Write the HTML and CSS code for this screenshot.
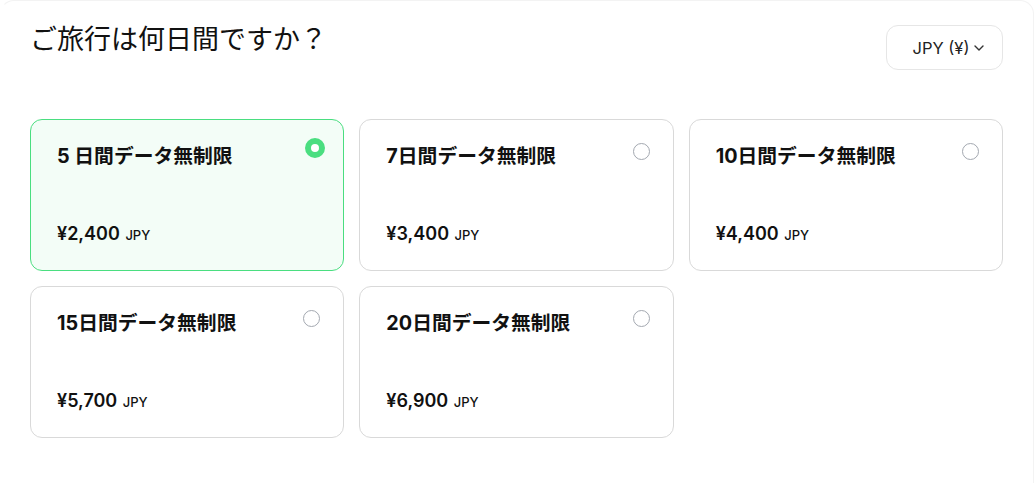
FILE: index.html
```html
<!DOCTYPE html>
<html lang="ja">
<head>
<meta charset="utf-8">
<link rel="stylesheet" href="styles.css">
</head>
<body>
<div class="panel">
  <div class="header">
    <h1 class="title">ご旅行は何日間ですか？</h1>
    <button class="currency">JPY (¥)<svg class="chev" width="10" height="6" viewBox="0 0 10 6"><path d="M1 1l4 4 4-4" fill="none" stroke="#333" stroke-width="1.4" stroke-linecap="round" stroke-linejoin="round"/></svg></button>
  </div>
  <div class="grid">
    <div class="card selected">
      <div class="name">5 日間データ無制限</div>
      <div class="price">¥2,400 <span class="cur">JPY</span></div>
      <span class="radio on"></span>
    </div>
    <div class="card">
      <div class="name">7日間データ無制限</div>
      <div class="price">¥3,400 <span class="cur">JPY</span></div>
      <span class="radio"></span>
    </div>
    <div class="card">
      <div class="name">10日間データ無制限</div>
      <div class="price">¥4,400 <span class="cur">JPY</span></div>
      <span class="radio"></span>
    </div>
    <div class="card">
      <div class="name">15日間データ無制限</div>
      <div class="price">¥5,700 <span class="cur">JPY</span></div>
      <span class="radio"></span>
    </div>
    <div class="card">
      <div class="name">20日間データ無制限</div>
      <div class="price">¥6,900 <span class="cur">JPY</span></div>
      <span class="radio"></span>
    </div>
  </div>
</div>
</body>
</html>
```

FILE: styles.css
```css
* { box-sizing: border-box; }
html, body { margin: 0; background: #fff; }
body {
  font-family: Inter, "Noto Sans CJK JP", sans-serif;
  color: #111;
}
.panel {
  border: 1px solid #f3f3f3;
  border-left-color: transparent;
  border-bottom: none;
  border-radius: 14px 14px 0 0;
  padding: 24px 30px 40px 29px;
  min-height: 500px;
}
.header {
  display: flex;
  justify-content: space-between;
  align-items: flex-start;
}
.title {
  margin: 0;
  font-family: "Noto Sans CJK JP", sans-serif;
  font-weight: 400;
  font-size: 27px;
  line-height: 26px;
  color: #111;
}
.currency {
  height: 45px;
  width: 117px;
  border: 1px solid #e6e6e6;
  border-radius: 12px;
  background: #fff;
  font-family: Inter, sans-serif;
  font-size: 16.5px;
  color: #222;
  display: flex;
  align-items: center;
  justify-content: center;
  gap: 5px;
  padding: 0 0 0 8px;
}
.chev { margin-top: 1px; }
.grid {
  margin-top: 49px;
  display: grid;
  grid-template-columns: repeat(3, 1fr);
  gap: 15px;
}
.card {
  position: relative;
  height: 152px;
  border: 1px solid #d9d9d9;
  border-radius: 12px;
  background: #fff;
  padding: 23px 26px 23px 26px;
  display: flex;
  flex-direction: column;
  justify-content: space-between;
}
.card.selected {
  border-color: #4ade80;
  background: #f3fdf7;
}
.name {
  font-family: Inter, "Noto Sans CJK JP", sans-serif;
  font-weight: 700;
  font-size: 19.8px;
  line-height: 26px;
  color: #111;
}
.price {
  font-weight: 600;
  font-size: 18px;
  line-height: 24px;
  color: #111;
}
.cur {
  font-size: 13px;
  font-weight: 500;
  margin-left: 1px;
}
.radio {
  position: absolute;
  top: 23px;
  right: 23px;
  width: 17px;
  height: 17px;
  border: 1.5px solid #a3a8b0;
  border-radius: 50%;
}
.radio.on {
  top: 18px;
  right: 18px;
  width: 20px;
  height: 20px;
  border: 6.5px solid #4ade80;
  background: #fff;
}
```
